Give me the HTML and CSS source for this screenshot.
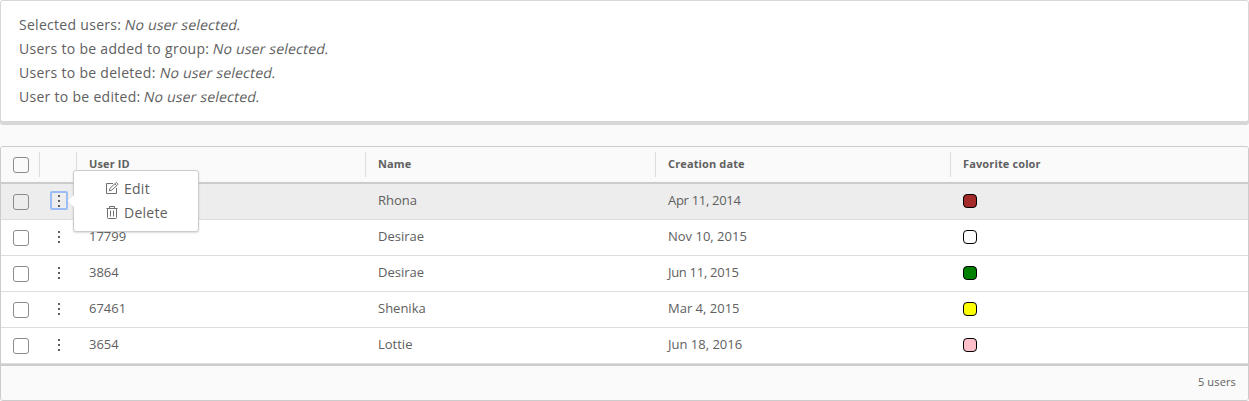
FILE: index.html
```
<!DOCTYPE html>
<html lang="en">
<head>
<meta charset="utf-8">
<title>Users</title>
<link rel="stylesheet" href="styles.css">
</head>
<body>
<svg class="defs" aria-hidden="true">
  <symbol id="dots" viewBox="0 0 16 16"><path fill="currentColor" d="M7 2h2v2H7zM7 7h2v2H7zM7 12h2v2H7z"/></symbol>
  <symbol id="edit" viewBox="0 0 14 14"><path fill="none" stroke="currentColor" stroke-width=".9" d="M8 2.500H1.500v10h10V7M4.300 9.800l.6-2.400 5.900-5.400c.4-.4.900-.4 1.300 0l.5.5c.4.4.400.9 0 1.300L6.700 9.200zM9.800 2.900l1.800 1.800"/></symbol>
  <symbol id="trash" viewBox="0 0 14 14"><path fill="none" stroke="currentColor" stroke-width=".9" d="M1.500 3.500h11M4.500 3.500v-2h5v2M2.500 3.500v9q0 1 1 1h7q1 0 1-1v-9M5.500 5.500v6M8.500 5.500v6"/></symbol>
</svg>
<section class="card">
  <p class="line">Selected users: <em>No user selected.</em></p>
  <p class="line">Users to be added to group: <em>No user selected.</em></p>
  <p class="line">Users to be deleted: <em>No user selected.</em></p>
  <p class="line">User to be edited: <em>No user selected.</em></p>
</section>
<section class="grid">
  <header class="row head">
    <div class="check"><span class="box"></span></div>
    <div class="actions"></div>
    <div class="cell">User ID</div>
    <div class="cell">Name</div>
    <div class="cell">Creation date</div>
    <div class="cell">Favorite color</div>
  </header>
  <div class="row active">
    <div class="check"><span class="box"></span></div>
    <div class="actions"><span class="toggle focused"><svg class="dots"><use href="#dots"/></svg></span>
      <div class="menu">
        <div class="item"><svg class="icon"><use href="#edit"/></svg><span>Edit</span></div>
        <div class="item"><svg class="icon"><use href="#trash"/></svg><span>Delete</span></div>
      </div>
    </div>
    <div class="cell"></div><div class="cell">Rhona</div><div class="cell tight">Apr 11, 2014</div>
    <div class="cell color"><span class="swatch brown"></span></div>
  </div>
  <div class="row">
    <div class="check"><span class="box"></span></div>
    <div class="actions"><span class="toggle"><svg class="dots"><use href="#dots"/></svg></span></div>
    <div class="cell">17799</div><div class="cell">Desirae</div><div class="cell">Nov 10, 2015</div>
    <div class="cell color"><span class="swatch white"></span></div>
  </div>
  <div class="row">
    <div class="check"><span class="box"></span></div>
    <div class="actions"><span class="toggle"><svg class="dots"><use href="#dots"/></svg></span></div>
    <div class="cell">3864</div><div class="cell">Desirae</div><div class="cell tight">Jun 11, 2015</div>
    <div class="cell color"><span class="swatch green"></span></div>
  </div>
  <div class="row">
    <div class="check"><span class="box"></span></div>
    <div class="actions"><span class="toggle"><svg class="dots"><use href="#dots"/></svg></span></div>
    <div class="cell">67461</div><div class="cell">Shenika</div><div class="cell">Mar 4, 2015</div>
    <div class="cell color"><span class="swatch yellow"></span></div>
  </div>
  <div class="row">
    <div class="check"><span class="box"></span></div>
    <div class="actions"><span class="toggle"><svg class="dots"><use href="#dots"/></svg></span></div>
    <div class="cell">3654</div><div class="cell">Lottie</div><div class="cell">Jun 18, 2016</div>
    <div class="cell color"><span class="swatch pink"></span></div>
  </div>
  <footer class="foot">5 users</footer>
</section>
</body>
</html>
```
FILE: styles.css
```
* { box-sizing: border-box; }
body { margin: 0; background: #fafafa; color: #606060; font-family: "Open Sans", "Noto Sans", sans-serif; font-size: 14px; overflow: hidden; }
.defs { display: none; }
.card { height: 122px; margin-bottom: 24px; padding: 12px 18px; background: #fff; border: 1px solid #d7d7d7; border-radius: 3px; box-shadow: 0 3px 0 #d7d7d7; }
.line { margin: 0; height: 24px; line-height: 24px; letter-spacing: .29px; white-space: nowrap; }
.line em { display: inline-block; font-style: normal; letter-spacing: .2px; transform: skewX(-12deg); }
.grid { height: 255px; background: #fff; border: 1px solid #ccc; border-radius: 3px; }
.row { display: grid; grid-template-columns: 38px 37px 289px 290px 295px 1fr; height: 36px; border-bottom: 1px solid #ddd; font-size: 13px; letter-spacing: 0; }
.head { height: 37px; background: #fafafa; border-bottom: 2px solid #ccc; font-size: 11px; font-weight: 700; letter-spacing: .13px; border-radius: 3px 3px 0 0; }
.active { background: #ededed; }
.check { padding: 10px 0 0 12px; }
.box { display: block; width: 16px; height: 16px; border: 1px solid #8c8c8c; border-radius: 3px; }
.actions { position: relative; padding: 8px 0 0 11px; }
.cell { padding: 0 0 4px 13px; display: flex; align-items: center; }
.color { padding-bottom: 2px; }
.tight { letter-spacing: -.3px; }
.head > div + div { margin: 5px 0; border-left: 1px solid #ddd; }
.head .cell { padding: 0 0 2px 12px; }
.toggle { display: flex; justify-content: center; align-items: center; width: 18px; height: 18px; border: 1px solid transparent; }
.focused { height: 19px; margin-top: -1px; padding-top: 1px; border: 2px solid #9abdf5; border-radius: 2px; }
.dots { width: 16px; height: 16px; flex: none; }
.menu { position: absolute; z-index: 1; left: 34px; top: -14px; width: 126px; height: 62px; padding: 5px 0 0 31px; background: #fff; border: 1px solid #ccc; border-radius: 3px; box-shadow: 0 1px 2px rgba(115,115,115,.25); font-size: 14px; letter-spacing: .25px; }
.menu::before { content: ""; position: absolute; left: -6px; top: 24px; border: 6px solid transparent; border-left: 0; border-right-color: #fff; }
.item { display: flex; align-items: center; gap: 5px; height: 24px; }
.icon { width: 14px; height: 14px; flex: none; }
.swatch { width: 14px; height: 14px; border: 1px solid #000; border-radius: 4px; }
.brown { background: brown; }
.white { background: white; }
.green { background: green; }
.yellow { background: yellow; }
.pink { background: pink; }
.foot { height: 36px; padding: 0 12px 3px 0; display: flex; align-items: center; justify-content: flex-end; border-top: 2px solid #ccc; background: #fafafa; font-size: 11px; letter-spacing: .15px; border-radius: 0 0 3px 3px; }
```
